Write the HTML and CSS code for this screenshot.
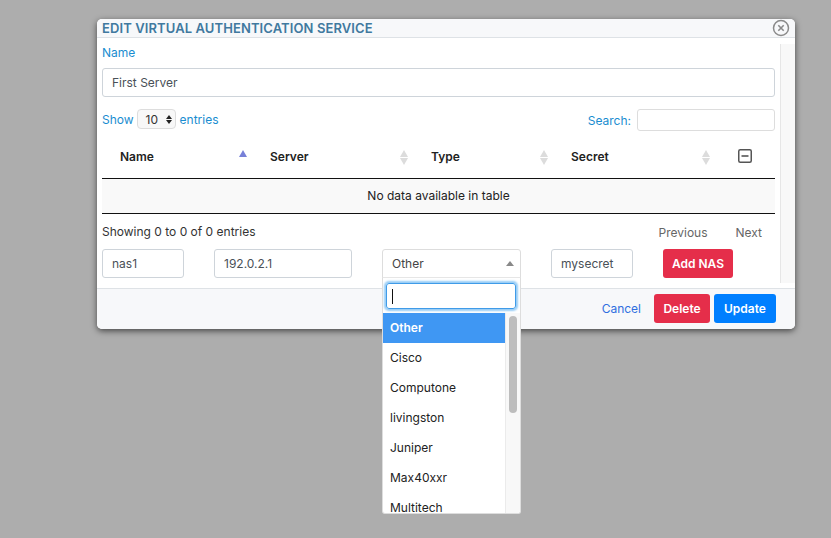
FILE: index.html
```html
<!DOCTYPE html>
<html lang="en">
<head>
    <meta charset="UTF-8">
    <meta name="viewport" content="width=device-width, initial-scale=1.0">
    <title>Edit Virtual Authentication Service</title>
    <link rel="stylesheet" href="styles.css">
</head>
<body>

<div class="modal">
    <header class="modal-header">
        <h1>EDIT VIRTUAL AUTHENTICATION SERVICE</h1>
        <svg class="close-icon" width="18" height="18" viewBox="0 0 18 18">
            <circle cx="9" cy="9" r="7.5" fill="none" stroke="#8a8a8a" stroke-width="1.5"/>
            <path d="M6.3 6.3l5.4 5.4M11.7 6.3l-5.4 5.4" stroke="#8a8a8a" stroke-width="1.6"/>
        </svg>
    </header>

    <div class="modal-scroll">
        <div class="modal-body">
            <label class="field-label">Name</label>
            <div class="input name-input">First Server</div>

            <div class="table-tools">
                <div class="length">
                    <span>Show</span>
                    <div class="length-select">
                        10
                        <span class="spinner"><i class="up"></i><i class="down"></i></span>
                    </div>
                    <span>entries</span>
                </div>
                <div class="search">
                    <span>Search:</span>
                    <div class="search-box"></div>
                </div>
            </div>

            <table class="nas-table">
                <thead>
                    <tr>
                        <th class="col-name"><div class="th-inner">Name <span class="sort asc"><i class="up"></i></span></div></th>
                        <th class="col-server"><div class="th-inner">Server <span class="sort"><i class="up"></i><i class="down"></i></span></div></th>
                        <th class="col-type"><div class="th-inner">Type <span class="sort"><i class="up"></i><i class="down"></i></span></div></th>
                        <th class="col-secret"><div class="th-inner">Secret <span class="sort"><i class="up"></i><i class="down"></i></span></div></th>
                        <th class="col-action">
                            <svg width="14" height="14" viewBox="0 0 14 14">
                                <rect x="0.75" y="0.75" width="12.5" height="12.5" rx="1.5" fill="none" stroke="#555" stroke-width="1.5"/>
                                <path d="M3.5 7h7" stroke="#555" stroke-width="1.6"/>
                            </svg>
                        </th>
                    </tr>
                </thead>
                <tbody>
                    <tr>
                        <td colspan="5">No data available in table</td>
                    </tr>
                </tbody>
            </table>

            <div class="table-info">
                <span class="info-text">Showing 0 to 0 of 0 entries</span>
                <div class="paging">
                    <a href="#">Previous</a>
                    <a href="#">Next</a>
                </div>
            </div>

            <div class="add-row">
                <div class="input add-name">nas1</div>
                <div class="input add-server">192.0.2.1</div>
                <div class="type-select">
                    <div class="type-current">Other <span class="arrow-up"></span></div>
                    <div class="type-drop">
                        <div class="drop-search"><span class="caret"></span></div>
                        <div class="drop-list">
                            <ul>
                                <li class="active">Other</li>
                                <li>Cisco</li>
                                <li>Computone</li>
                                <li>livingston</li>
                                <li>Juniper</li>
                                <li>Max40xxr</li>
                                <li>Multitech</li>
                            </ul>
                            <div class="drop-scroll"><div class="drop-thumb"></div></div>
                        </div>
                    </div>
                </div>
                <div class="input add-secret">mysecret</div>
                <button class="btn btn-red btn-add">Add NAS</button>
            </div>
        </div>
        <div class="scroll-track"></div>
    </div>

    <footer class="modal-footer">
        <a href="#" class="cancel">Cancel</a>
        <button class="btn btn-red btn-delete">Delete</button>
        <button class="btn btn-blue btn-update">Update</button>
    </footer>
</div>

</body>
</html>
```

FILE: styles.css
```css
* {
    box-sizing: border-box;
}
html, body {
    height: 100%;
}
body {
    font-family: Inter, "Liberation Sans", Arial, sans-serif;
    font-size: 12px;
    margin: 0;
    padding: 19px 0 0 97px;
    background-color: #adadad;
    color: #333;
    overflow: hidden;
}
.modal {
    width: 698px;
    height: 310px;
    background-color: white;
    border-radius: 5px;
    box-shadow: 0 2px 6px rgba(0,0,0,0.6);
    display: flex;
    flex-direction: column;
}
.modal-header {
    height: 19px;
    flex: none;
    display: flex;
    justify-content: space-between;
    align-items: center;
    padding: 0 5px;
    background-color: #f7f8fa;
    border-bottom: 1px solid #dee2e6;
    border-radius: 5px 5px 0 0;
}
.modal-header h1 {
    margin: 0;
    font-size: 13px;
    font-weight: 600;
    letter-spacing: 0.1px;
    color: #40799f;
}
.close-icon {
    flex: none;
}
.modal-scroll {
    flex: 1;
    display: flex;
    min-height: 0;
}
.modal-body {
    width: 683px;
    padding: 7px 0 0 5px;
}
.scroll-track {
    width: 15px;
    margin: 6px 0 5px;
    background-color: #f8f8f8;
    border-left: 1px solid #e6e6e6;
}
.field-label {
    display: block;
    height: 16px;
    line-height: 16px;
    color: #1a8dd0;
}
.input {
    border: 1px solid #ced4da;
    border-radius: 3px;
    height: 29px;
    line-height: 27px;
    padding: 0 9px;
    color: #495057;
    background-color: white;
}
.name-input {
    width: 673px;
    margin-top: 7px;
}
.table-tools {
    display: flex;
    justify-content: space-between;
    width: 673px;
    margin-top: 12px;
    color: #1a8dd0;
}
.length {
    display: flex;
    align-items: center;
    height: 20px;
    gap: 3px;
}
.length-select {
    width: 39px;
    height: 20px;
    margin-right: 1px;
    border: 1px solid #ddd;
    border-radius: 4px;
    background-color: #f8f8f8;
    color: #333;
    display: flex;
    align-items: center;
    justify-content: space-between;
    padding: 0 3px 0 8px;
}
.spinner {
    display: flex;
    flex-direction: column;
    gap: 1px;
}
.spinner i {
    display: block;
    border-left: 3px solid transparent;
    border-right: 3px solid transparent;
}
.spinner .up {
    border-bottom: 4px solid #222;
}
.spinner .down {
    border-top: 4px solid #222;
}
.search {
    display: flex;
    align-items: center;
    height: 22px;
    gap: 6px;
}
.search-box {
    width: 138px;
    height: 22px;
    border: 1px solid #ddd;
    border-radius: 3px;
}
.nas-table {
    width: 673px;
    table-layout: fixed;
    border-collapse: collapse;
    margin-top: 9px;
}
.nas-table th {
    height: 38px;
    padding: 0 5px 4px 18px;
    text-align: left;
    color: #222;
    font-weight: 600;
    border-bottom: 1px solid #111;
}
.col-name {
    width: 150px;
}
.col-server {
    width: 161px;
}
.col-type {
    width: 140px;
}
.col-secret {
    width: 162px;
}
.nas-table .col-action {
    padding: 0 0 2px 23px;
}
.th-inner {
    display: flex;
    justify-content: space-between;
    align-items: center;
}
.sort {
    display: flex;
    flex-direction: column;
    gap: 1px;
    margin-top: 1px;
}
.sort i {
    display: block;
    border-left: 4.5px solid transparent;
    border-right: 4.5px solid transparent;
}
.sort .up {
    border-bottom: 7px solid #dcdcdc;
}
.sort .down {
    border-top: 7px solid #dcdcdc;
}
.sort.asc {
    margin-top: -7px;
}
.sort.asc .up {
    border-bottom-color: #7780d8;
}
.nas-table td {
    height: 35px;
    text-align: center;
    background-color: #f9f9f9;
    color: #222;
    border-bottom: 1px solid #111;
}
.table-info {
    display: flex;
    justify-content: space-between;
    width: 673px;
    margin-top: 10px;
    height: 16px;
    line-height: 16px;
}
.paging {
    display: flex;
    gap: 28px;
    padding-right: 13px;
    margin-top: 1px;
}
.paging a {
    color: #666;
    text-decoration: none;
}
.add-row {
    display: flex;
    margin-top: 9px;
    width: 673px;
}
.add-name {
    width: 82px;
    margin-right: 30px;
}
.add-server {
    width: 138px;
    margin-right: 30px;
}
.add-secret {
    width: 82px;
    margin-right: 30px;
}
.type-select {
    position: relative;
    width: 139px;
    margin-right: 30px;
}
.type-current {
    height: 29px;
    line-height: 27px;
    padding: 0 9px;
    border: 1px solid #ddd;
    border-radius: 3px 3px 0 0;
    color: #444;
    background-color: white;
    display: flex;
    justify-content: space-between;
    align-items: center;
}
.arrow-up {
    border-left: 4px solid transparent;
    border-right: 4px solid transparent;
    border-bottom: 5px solid #888;
    margin-right: -3px;
}
.type-drop {
    position: absolute;
    top: 28px;
    left: 0;
    width: 139px;
    height: 237px;
    background-color: white;
    border: 1px solid #ddd;
    border-top-color: #e6e6e6;
    border-radius: 0 0 3px 3px;
    overflow: hidden;
    z-index: 5;
}
.drop-search {
    width: 130px;
    height: 26px;
    margin: 5px 0 0 3px;
    padding: 5px 0 0 5px;
    border: 1px solid #3f9be8;
    border-radius: 3px;
    box-shadow: 0 0 2px 2px rgba(80,170,240,0.6);
}
.caret {
    display: block;
    width: 1px;
    height: 15px;
    background-color: #111;
}
.drop-list {
    display: flex;
    margin-top: 4px;
    height: 200px;
    overflow: hidden;
}
.drop-list ul {
    list-style: none;
    margin: 0;
    padding: 0;
    width: 122px;
    flex: none;
}
.drop-list li {
    height: 30px;
    line-height: 30px;
    padding-left: 7px;
    color: #222;
}
.drop-list li.active {
    background-color: #3f97f3;
    color: white;
    font-weight: 600;
}
.drop-scroll {
    flex: 1;
    background-color: #f8f8f8;
    border-left: 1px solid #ebebeb;
    padding: 3px 0 0 3px;
}
.drop-thumb {
    width: 8px;
    height: 97px;
    background-color: #bdbdbd;
    border-radius: 4px;
}
.btn {
    border: none;
    border-radius: 3px;
    height: 29px;
    font-family: inherit;
    font-size: 12px;
    font-weight: 600;
    color: white;
    padding: 0;
}
.btn-red {
    background-color: #e52e4a;
}
.btn-blue {
    background-color: #007fff;
}
.btn-add {
    width: 70px;
}
.modal-footer {
    height: 41px;
    flex: none;
    display: flex;
    justify-content: flex-end;
    align-items: center;
    padding: 0 19px 1px 0;
    background-color: #f7f8fa;
    border-top: 1px solid #dee2e6;
    border-radius: 0 0 5px 5px;
}
.cancel {
    color: #2f6fe0;
    text-decoration: none;
    margin-right: 13px;
}
.btn-delete {
    width: 56px;
    margin-right: 4px;
}
.btn-update {
    width: 62px;
}
```
